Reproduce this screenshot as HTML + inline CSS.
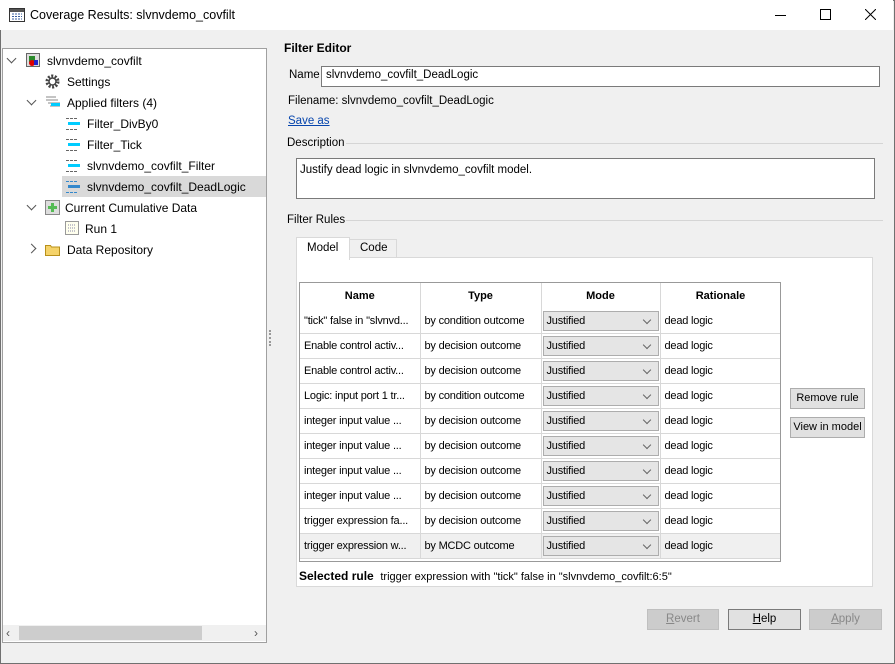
<!DOCTYPE html><html><head><style>
body{margin:0;width:895px;height:664px;overflow:hidden;font-family:"Liberation Sans",sans-serif;font-size:12px;color:#000;background:#f0f0f0;position:relative}
.a{position:absolute}
.win{left:0;top:0;width:893px;height:662px;border:1px solid #707070;background:#f0f0f0}
.title{left:0;top:0;width:893px;height:30px;background:#fff}
.tree{left:2px;top:48px;width:263px;height:593px;background:#fff;border:1px solid #a0a0a0}
.t{position:absolute;white-space:nowrap;font-size:12px}
.chev{position:absolute;width:6px;height:6px;border-right:1.3px solid #555;border-bottom:1.3px solid #555}
.inp{background:#fff;border:1px solid #7a7a7a}
.btn{position:absolute;background:#e1e1e1;border:1px solid #adadad;text-align:center;line-height:19px;font-size:11.5px;white-space:nowrap}
table{border-collapse:collapse;font-size:11px}
td{height:24px;border-right:1px solid #d8d8d8;border-bottom:1px solid #d8d8d8;padding:0 0 0 4px;white-space:nowrap;overflow:hidden;letter-spacing:-0.2px}
th{height:24px;border-right:1px solid #d8d8d8;font-size:11px}
.cb{background:#e5e5e5;border:1px solid #adadad;height:20px;line-height:18px;padding-left:3px;position:relative;margin-left:-3px;width:116px;box-sizing:border-box}
.cb:after{content:"";position:absolute;right:8px;top:5px;width:5px;height:5px;border-right:1px solid #666;border-bottom:1px solid #666;transform:rotate(45deg)}
</style></head><body>
<div class="a win"></div>
<div class="a title"></div>
<svg class="a" style="left:9px;top:8px" width="16" height="14"><rect x=".5" y=".5" width="15" height="13" fill="#fff" stroke="#333"/><rect x="1" y="1" width="14" height="3" fill="#555"/><path d="M3 6h10M3 8.5h10M3 11h10" stroke="#3a5fa0" stroke-dasharray="2 1"/></svg>
<div class="t" style="left:30px;top:8px;font-size:12.5px">Coverage Results: slvnvdemo_covfilt</div>
<div class="a" style="left:775px;top:15px;width:11px;height:1px;background:#000"></div>
<div class="a" style="left:820px;top:9px;width:9px;height:9px;border:1px solid #000"></div>
<svg class="a" style="left:865px;top:9px" width="11" height="11"><path d="M0 0L11 11M11 0L0 11" stroke="#000"/></svg>
<div class="a tree"></div>
<div class="a" style="left:62px;top:176px;width:204px;height:21px;background:#d9d9d9"></div>
<div class="chev" style="left:8px;top:55px;transform:rotate(45deg)"></div>
<svg class="a" style="left:26px;top:53px" width="14" height="14"><rect x=".5" y=".5" width="13" height="13" fill="#ddd" stroke="#666"/><rect x="3" y="3" width="6" height="6" fill="#2a8a2a"/><circle cx="6" cy="10" r="3" fill="#d00"/><rect x="8" y="7" width="4" height="5" fill="#22c"/></svg>
<div class="t" style="left:47px;top:54px">slvnvdemo_covfilt</div>
<svg class="a" style="left:45px;top:74px" width="15" height="15"><circle cx="7.5" cy="7.5" r="5.5" fill="none" stroke="#444" stroke-width="3" stroke-dasharray="2 1.5"/><circle cx="7.5" cy="7.5" r="3.5" fill="none" stroke="#444" stroke-width="1.5"/></svg>
<div class="t" style="left:67px;top:75px">Settings</div>
<div class="chev" style="left:28px;top:97px;transform:rotate(45deg)"></div>
<svg class="a" style="left:45px;top:96px" width="16" height="14"><path d="M1 1h10M1 4h12M3 7h12M5 10h10" stroke="#888"/><rect x="6" y="7" width="9" height="3" fill="#0cf"/></svg>
<div class="t" style="left:67px;top:96px">Applied filters (4)</div>
<svg class="a" style="left:65px;top:117px" width="16" height="14"><path d="M1 1.5h12M1 12.5h12" stroke="#666" stroke-dasharray="3 1"/><rect x="3" y="5" width="12" height="3" fill="#0cf"/></svg>
<div class="t" style="left:87px;top:117px">Filter_DivBy0</div>
<svg class="a" style="left:65px;top:138px" width="16" height="14"><path d="M1 1.5h12M1 12.5h12" stroke="#666" stroke-dasharray="3 1"/><rect x="3" y="5" width="12" height="3" fill="#0cf"/></svg>
<div class="t" style="left:87px;top:138px">Filter_Tick</div>
<svg class="a" style="left:65px;top:159px" width="16" height="14"><path d="M1 1.5h12M1 12.5h12" stroke="#666" stroke-dasharray="3 1"/><rect x="3" y="5" width="12" height="3" fill="#0cf"/></svg>
<div class="t" style="left:87px;top:159px">slvnvdemo_covfilt_Filter</div>
<svg class="a" style="left:65px;top:180px" width="16" height="14"><path d="M1 1.5h12M1 12.5h12" stroke="#38c" stroke-dasharray="3 1"/><rect x="3" y="5" width="12" height="3" fill="#38c"/></svg>
<div class="t" style="left:87px;top:180px">slvnvdemo_covfilt_DeadLogic</div>
<div class="chev" style="left:28px;top:202px;transform:rotate(45deg)"></div>
<svg class="a" style="left:45px;top:200px" width="15" height="15"><rect x=".5" y=".5" width="14" height="14" fill="#ddd" stroke="#888"/><path d="M7.5 3v9M3 7.5h9" stroke="#5b5" stroke-width="3"/></svg>
<div class="t" style="left:65px;top:201px">Current Cumulative Data</div>
<svg class="a" style="left:65px;top:221px" width="14" height="14"><rect x=".5" y=".5" width="13" height="13" fill="#ffe" stroke="#999"/><path d="M3 4h8M3 7h8M3 10h8" stroke="#88a" stroke-dasharray="1 1"/></svg>
<div class="t" style="left:85px;top:222px">Run 1</div>
<div class="chev" style="left:28px;top:245px;transform:rotate(-45deg)"></div>
<svg class="a" style="left:45px;top:243px" width="16" height="13"><path d="M.5 2.5h5l1 1.5h8v8.5h-14z" fill="#f5d36a" stroke="#b8901a"/></svg>
<div class="t" style="left:67px;top:243px">Data Repository</div>
<div class="a" style="left:3px;top:625px;width:263px;height:16px;background:#f0f0f0"></div>
<div class="a" style="left:19px;top:626px;width:183px;height:14px;background:#cdcdcd"></div>
<div class="t" style="left:6px;top:626px;color:#555">‹</div>
<div class="t" style="left:254px;top:626px;color:#555">›</div>
<div class="a" style="left:269px;top:330px;width:2px;height:16px;border-left:2px dotted #999"></div>

<div class="t" style="left:284px;top:41px;font-weight:bold">Filter Editor</div>
<div class="t" style="left:289px;top:69px;font-size:11.5px">Name</div>
<div class="a inp" style="left:321px;top:66px;width:557px;height:19px"></div>
<div class="t" style="left:326px;top:69px;font-size:11.5px">slvnvdemo_covfilt_DeadLogic</div>
<div class="t" style="left:288px;top:95px;font-size:11.5px">Filename: slvnvdemo_covfilt_DeadLogic</div>
<div class="t" style="left:288px;top:115px;color:#0645ad;text-decoration:underline;font-size:11.5px">Save as</div>
<div class="t" style="left:287px;top:137px;font-size:11.5px">Description</div>
<div class="a" style="left:346px;top:143px;width:537px;height:1px;background:#d5d5d5"></div>
<div class="a inp" style="left:296px;top:158px;width:577px;height:39px"></div>
<div class="t" style="left:300px;top:164px;font-size:11.5px">Justify dead logic in slvnvdemo_covfilt model.</div>
<div class="t" style="left:287px;top:214px;font-size:11.5px">Filter Rules</div>
<div class="a" style="left:346px;top:220px;width:537px;height:1px;background:#d5d5d5"></div>
<div class="a" style="left:296px;top:257px;width:575px;height:328px;background:#fff;border:1px solid #d9d9d9"></div>
<div class="a" style="left:349px;top:239px;width:46px;height:18px;border:1px solid #d9d9d9;border-bottom:none"></div>
<div class="a" style="left:296px;top:237px;width:52px;height:22px;background:#fff;border:1px solid #d9d9d9;border-bottom:none"></div>
<div class="t" style="left:307px;top:242px;font-size:11.5px">Model</div>
<div class="t" style="left:360px;top:242px;font-size:11.5px">Code</div>
<div class="a" style="left:299px;top:282px;width:480px;height:278px;border:1px solid #999;background:#fff;overflow:hidden">
<table style="width:481px;table-layout:fixed"><colgroup><col style="width:120px"><col style="width:121px"><col style="width:119px"><col style="width:121px"></colgroup>
<tr><th>Name</th><th>Type</th><th>Mode</th><th>Rationale</th></tr>
<tr><td>"tick" false in "slvnvd...</td><td>by condition outcome</td><td><div class="cb">Justified</div></td><td>dead logic</td></tr>
<tr><td>Enable control activ...</td><td>by decision outcome</td><td><div class="cb">Justified</div></td><td>dead logic</td></tr>
<tr><td>Enable control activ...</td><td>by decision outcome</td><td><div class="cb">Justified</div></td><td>dead logic</td></tr>
<tr><td>Logic: input port 1 tr...</td><td>by condition outcome</td><td><div class="cb">Justified</div></td><td>dead logic</td></tr>
<tr><td>integer input value ...</td><td>by decision outcome</td><td><div class="cb">Justified</div></td><td>dead logic</td></tr>
<tr><td>integer input value ...</td><td>by decision outcome</td><td><div class="cb">Justified</div></td><td>dead logic</td></tr>
<tr><td>integer input value ...</td><td>by decision outcome</td><td><div class="cb">Justified</div></td><td>dead logic</td></tr>
<tr><td>integer input value ...</td><td>by decision outcome</td><td><div class="cb">Justified</div></td><td>dead logic</td></tr>
<tr><td>trigger expression fa...</td><td>by decision outcome</td><td><div class="cb">Justified</div></td><td>dead logic</td></tr>
<tr style="background:#f0f0f0"><td>trigger expression w...</td><td>by MCDC outcome</td><td><div class="cb">Justified</div></td><td>dead logic</td></tr>
</table></div>
<div class="t" style="left:299px;top:569px"><b>Selected rule</b>&nbsp; <span style="font-size:11px">trigger expression with "tick" false in "slvnvdemo_covfilt:6:5"</span></div>
<div class="btn" style="left:790px;top:388px;width:73px;font-size:11px">Remove rule</div>
<div class="btn" style="left:790px;top:417px;width:73px;font-size:11px">View in model</div>
<div class="btn" style="left:647px;top:609px;width:70px;color:#888;background:#ccc;border-color:#bfbfbf"><u>R</u>evert</div>
<div class="btn" style="left:728px;top:609px;width:71px;border-color:#7a7a7a"><u>H</u>elp</div>
<div class="btn" style="left:809px;top:609px;width:71px;color:#888;background:#ccc;border-color:#bfbfbf"><u>A</u>pply</div>
</body></html>
